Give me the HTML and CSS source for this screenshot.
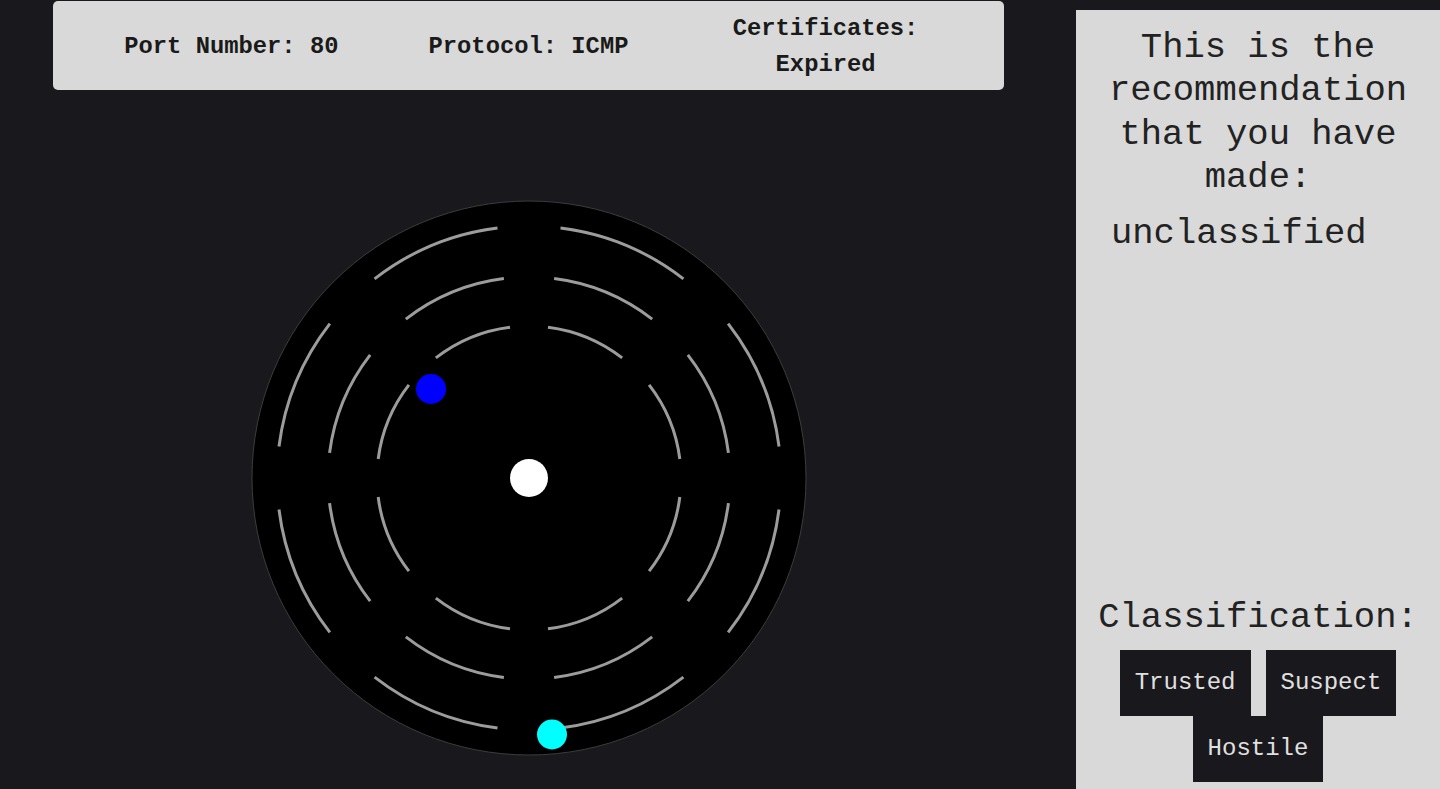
FILE: index.html
```html
<!DOCTYPE html>
<html lang="en">
<head>
<meta charset="utf-8">
<title>Radar</title>
<link rel="stylesheet" href="styles.css">
</head>
<body>
<div class="app">
  <main class="main">
    <header class="infobar">
      <div class="info-item">Port Number: 80</div>
      <div class="info-item">Protocol: ICMP</div>
      <div class="info-item">Certificates: Expired</div>
    </header>
    <div class="radar-wrap">
      <svg class="radar" width="556" height="556" viewBox="-278 -278 556 556">
        <circle cx="0" cy="0" r="277" fill="#000" stroke="#3c3c3c" stroke-width="1"/>
        <g fill="none" stroke="#9c9c9c" stroke-width="3">
          <circle cx="0" cy="0" r="252" pathLength="360" stroke-dasharray="30.6 14.4" stroke-dashoffset="-7.2"/>
          <circle cx="0" cy="0" r="201" pathLength="360" stroke-dasharray="30.6 14.4" stroke-dashoffset="-7.2"/>
          <circle cx="0" cy="0" r="152" pathLength="360" stroke-dasharray="30.6 14.4" stroke-dashoffset="-7.2"/>
        </g>
        <circle cx="0" cy="0" r="19" fill="#fff"/>
        <circle cx="-98" cy="-89" r="15" fill="#0000ff"/>
        <circle cx="23" cy="256.5" r="15" fill="#00ffff"/>
      </svg>
    </div>
  </main>
  <aside class="panel">
    <div class="panel-top">
      <h2 class="rec-title">This is the recommendation that you have made:</h2>
      <p class="rec-value">unclassified</p>
    </div>
    <div class="panel-bottom">
      <p class="class-label">Classification:</p>
      <div class="buttons">
        <button class="btn" type="button">Trusted</button>
        <button class="btn" type="button">Suspect</button>
        <button class="btn" type="button">Hostile</button>
      </div>
    </div>
  </aside>
</div>
</body>
</html>
```
FILE: styles.css
```css
html, body {
  margin: 0;
  padding: 0;
  height: 100%;
  overflow: hidden;
}
body {
  background: #19181d;
  font-family: "Liberation Mono", "Courier New", monospace;
}
.app {
  display: flex;
  gap: 19px;
  height: 100vh;
}
.main {
  width: 1057px;
  flex: none;
  display: flex;
  flex-direction: column;
  align-items: center;
}
.infobar {
  width: 90%;
  box-sizing: border-box;
  height: 89px;
  margin-top: 1px;
  padding: 3px 30px 0;
  background: #d9d9d9;
  border-radius: 5px;
  display: flex;
  align-items: center;
  font-weight: bold;
  font-size: 23.8px;
  line-height: 36px;
  color: #1a1a1a;
}
.info-item {
  flex: 1;
  text-align: center;
}
.radar-wrap {
  margin-top: 110px;
  display: flex;
  justify-content: center;
}
.radar {
  display: block;
}
.panel {
  flex: 1;
  margin-top: 10px;
  background: #d9d9d9;
  display: flex;
  flex-direction: column;
  justify-content: space-between;
  padding: 16px 0 7px;
  color: #222;
  font-size: 35.5px;
  line-height: 43.4px;
}
.rec-title {
  margin: 0;
  font-weight: normal;
  font-size: inherit;
  text-align: center;
}
.rec-value {
  margin: 12px 0 0;
  padding-left: 35px;
}
.class-label {
  margin: 0;
  text-align: center;
}
.buttons {
  margin-top: 11px;
  display: flex;
  flex-wrap: wrap;
  justify-content: center;
  column-gap: 15px;
  padding: 0 40px;
}
.btn {
  background: #19181d;
  color: #e0e0e0;
  border: none;
  border-radius: 0;
  font-family: "Liberation Mono", "Courier New", monospace;
  font-size: 24px;
  line-height: 26px;
  padding: 20px 15px 20px;
  margin: 0;
}
```
